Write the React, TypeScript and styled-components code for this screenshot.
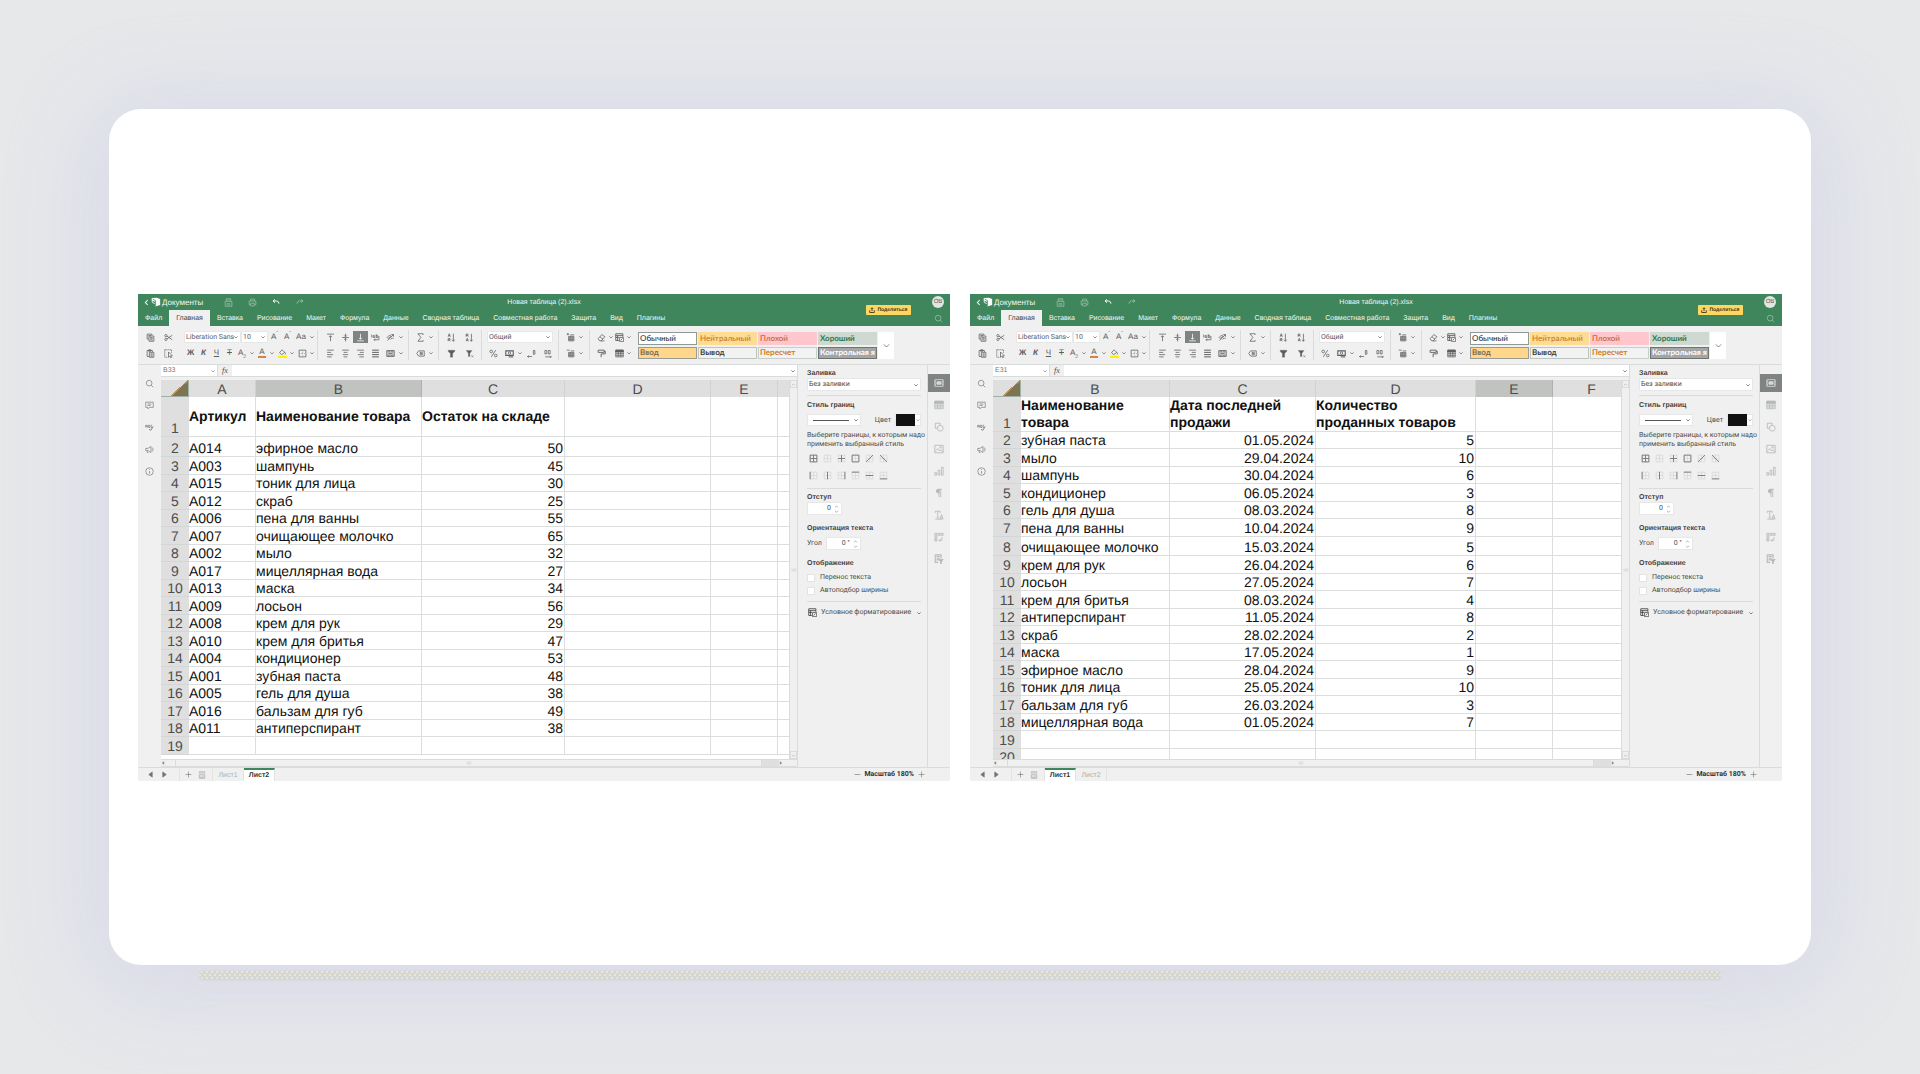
import React, { useId } from "react";
import styled, { createGlobalStyle, css } from "styled-components";

const ui = `"Liberation Sans", Arial, sans-serif`;
const compact = `Roboto, "Liberation Sans", sans-serif`;
const green = "#40865c";
const panel = "#f0f0f0";
const line = "#dadcdb";
const ink = "#4a4d4b";

const GlobalStyle = createGlobalStyle`
  *, *::before, *::after { box-sizing: border-box; }
  body { margin: 0; background: #e6e8ea; font-family: ${ui}; text-rendering: geometricPrecision; }
  button, input, select { font: inherit; color: inherit; text-rendering: inherit; margin: 0; padding: 0; border: 0; border-radius: 0; background: none; outline: none; }
  h2, p { margin: 0; }
`;

/* ---------- icons ---------- */

const icons: Record<string, React.ReactNode> = {
  chevron: <path d="M3.500 5 6 7.500 8.500 5" />,
  up: <path d="M2.500 8 6 4.500 9.500 8" />,
  down: <path d="M2.500 4.500 6 8 9.500 4.500" />,
  back: <path d="M8 2 4 6l4 4" strokeWidth="1.800" />,
  save: <><path d="M1.500 4.500h9V11h-9zM3 4.500V1h6v3.500" /><path d="M4.500 2.700h3M3.500 7.500h5M3.500 9.200h5" /></>,
  print: <><path d="M3.500 4V1.500h5V4M3.500 9H1.500V4h9v5h-2" /><path d="M3.500 7h5v3.500h-5z" /></>,
  undo: <path d="M4.500 2 1.500 4.500l3 2.500M1.500 4.500h5.500q3 0 3.500 4" strokeWidth="1.500" />,
  redo: <path d="M7.500 2l3 2.500-3 2.500M10.500 4.500H5q-3 0-3.500 4" strokeWidth="1.300" />,
  search: <><circle cx="5.500" cy="5.500" r="3.800" /><path d="M8.300 8.300 11 11" /></>,
  copy: <><path d="M8 3V1.500H1.500V8H4" /><path d="M4 4h6.500v7H4zM5.500 6H9M5.500 7.700H9M5.500 9.300H9M3 3.500h4" /></>,
  paste: <><path d="M4 10H1.500V2h7v2M3.500 1h3v2h-3z" /><path d="M4.500 4.500h6v6.500h-6zM6 6.500h3M6 8h3M6 9.500h3" /></>,
  cut: <><circle cx="2.500" cy="3.500" r="1.500" /><circle cx="2.500" cy="8.500" r="1.500" /><path d="M4 4.200 11 9M4 7.800 11 3" /></>,
  pick: <><path d="M1 1h9v4M1 1v10h4" strokeDasharray="1.500 .8" /><path d="M6 4v7l1.700-1.600L9 11.800l1-.5-1.100-2.300H11z" fill="#fff" /></>,
  alignTop: <path d="M1.500 1.500h9M6 11V4M4 5.500 6 3.500l2 2" />,
  alignMid: <path d="M1.500 6h9M6 .8v4M6 7.200v4M4.200 3.200 6 5l1.800-1.800M4.200 8.800 6 7l1.800 1.800" />,
  alignBottom: <path d="M1.500 10.500h9M6 1v7M4 6.500l2 2 2-2" />,
  wrap: <><path d="M1 2v4M3 3.500h2v2.500H3zM7 1.500v4.500M7 3.500h2V6H7" /><path d="M10.500 4v5H4M5.500 7.500 4 9l1.500 1.500" /></>,
  orient: <><path d="M2 10 10 2M7 2h3v3" /><path d="M1.500 6 5 2.500 6.500 4 3 7.500zM6 8.500l2.500-2 1.500 1.500" /></>,
  left: <path d="M1.500 1.500h9M1.500 4.500h5.500M1.500 7.500h8M1.500 10.500h6" />,
  center: <path d="M1.500 1.500h9M3.500 4.500h5M2.500 7.500h7M3.500 10.500h5" />,
  right: <path d="M1.500 1.500h9M5 4.500h5.500M2.500 7.500h8M4.500 10.500h6" />,
  justify: <path d="M1.500 1.500h9M1.500 4.500h9M1.500 7.500h9M1.500 10.500h9" strokeWidth="1.300" />,
  merge: <path d="M1 2h10v8H1zM4 2v2M8 2v2M4 8v2M8 8v2M1 4h10M1 8h10M3 6h6" />,
  sum: <path d="M9.500 2.500V1h-7L6.500 6l-4 5h7V9.500" />,
  named: <path d="M1 6 3.500 2.500H11v7H3.500zM5 4.500h4M5 6h4M5 7.500h4" />,
  sortAz: <><path d="M1.500 5 3 1l1.500 4M2 3.700h2M1.500 11V7.500h2.500V9.200H1.500M4.500 11 3 9.200" /><path d="M8.500 1v10M6.800 9l1.700 2 1.700-2" /></>,
  sortZa: <><path d="M1.500 11 3 7l1.500 4M2 9.700h2M1.500 5V1.500h2.500V3.200H1.500M4.500 5 3 3.200" /><path d="M8.500 1v10M6.800 9l1.700 2 1.700-2" /></>,
  filter: <path d="M1.500 1.500h9v1.500L7.500 6v5h-3V6l-3-3z" fill="currentColor" strokeWidth=".3" />,
  unfilter: <><path d="M1.500 2h8L6.500 5.500V10h-2V5.500z" fill="currentColor" strokeWidth=".3" /><path d="M8.500 8.500 11 11M11 8.500 8.500 11" strokeWidth=".7" /></>,
  percent: <><circle cx="3" cy="3.300" r="1.800" /><circle cx="9" cy="8.700" r="1.800" /><path d="M9 1.500 3 10.500" /></>,
  money: <><path d="M1 2.500h10v6H1z" strokeWidth="1.400" /><circle cx="6" cy="5.500" r="1.600" /><path d="M5 10.500h6" strokeWidth="1.400" /></>,
  decLess: <><path d="M.8 10h6M2.300 8.500.8 10l1.500 1.500" /><path d="M8.500 2h2v5h-2z" /></>,
  decMore: <><path d="M3 10.500h8M9.500 9 11 10.500 9.500 12" /><path d="M2.500 2h2.500v4.500H2.500zM7 2h2.500v4.500H7z" /></>,
  cellAdd: <><path d="M1 1.500h3M2.500 0v3M5.500 2.500H11" /><path d="M3.500 4.500h7v6h-7zM5.500 4.500v6M8 4.500v6M3.500 6.500h7M3.500 8.500h7" /></>,
  cellDel: <><path d="M1 1.500h4M6.500 2.500H11" /><path d="M3.500 4.500h7v6h-7zM5.500 4.500v6M8 4.500v6M3.500 6.500h7M3.500 8.500h7" /></>,
  eraser: <><path d="M1.500 7.500 6.500 2l4 3-5 5.500H3.500zM4 5l4 3.200" /><path d="M5 10.500h5" /></>,
  condfmt: <><path d="M1 1h9.500v4M1 1v9h4M1 3.500h9.500M1 6h4M3.500 3.500V10" strokeWidth="1.200" /><path d="M6 6h5.500v5.500H6zM7.500 10l2.500-2.800" /></>,
  painter: <path d="M1.500 1.500h8v3h-8zM9.500 3H11v3.500H5.500V11" strokeWidth="1.200" />,
  table: <><path d="M1 1.500h10v9H1zM4.300 4v6.500M7.700 4v6.500M1 6.200h10M1 8.400h10" /><path d="M1 1.500h10v2.500H1z" fill="currentColor" /></>,
  borders: <><path d="M1.500 1.500h9v9h-9z" /><path d="M6 2v8M2 6h8" strokeDasharray="1 1" strokeWidth=".6" /></>,
  fill: <><path d="M2 5 5.500 1 9 4.500 5 7.500zM9 4.500q1.800 2 .5 2.800" /><path d="M0 10.500h12" stroke="#fff200" strokeWidth="3" /></>,
  comment: <><path d="M1 1.500h10v7H6L4 10.500v-2H1z" /><path d="M3.500 4h5M3.500 6h4" /></>,
  spell: <><path d="M1 6V3h2v3M1 4.700h2M4.500 6V3h1.800v3zM9.500 3H8v3h1.500" /><path d="M5.500 8 7.500 10 11 4.500" strokeWidth="1.300" /></>,
  horn: <><path d="M1 4.500h3L8 2v8L4 7.500H1zM3 7.500V10h1.500" /><path d="M10 3.500q1.500 2.500 0 5" /></>,
  info: <><circle cx="6" cy="6" r="5" /><path d="M6 5.300v3.500M6 3v1" /></>,
  cellSet: <><path d="M1 2h10v8H1z" /><path d="M3.500 4.500h5v3h-5z" fill="currentColor" /><path d="M1 4h1.500M1 6h1.500M1 8h1.500M9.500 4H11M9.500 6H11M9.500 8H11" /></>,
  shape: <><path d="M4 7.500H1.500v-6h6V4" /><circle cx="7.500" cy="7.500" r="3.500" /></>,
  image: <><path d="M1 1.500h10v9H1zM1.500 9l3-3.500L7 8.500l1.500-1.500L11 9.500" /><circle cx="8" cy="4" r="1" /></>,
  chart: <path d="M1 8h2v3H1zM5 5h2v6H5zM9 1.500h2V11H9z" />,
  para: <><path d="M6 1.500H5a2.200 2.200 0 0 0 0 4.400h1z" fill="currentColor" /><path d="M9.500 1.500H5.500M6 1.500V11M8 1.500V11" /></>,
  textArt: <><path d="M1.500 3.500v-2h6v2M4.500 1.500V9M3 9.500h3" /><path d="M7 11 9 5.500l2 5.500M7.500 9.500h3M1.500 11h9" /></>,
  pivot: <><path d="M1 1.500h2.500V4H1zM4.800 1.500h2.500V4H4.800zM8.500 1.500H11V4H8.500zM1 5.500h2.500V8H1zM1 9h2.500v2H1z" /><path d="M9.500 6v4H6M7.500 8.500 6 10l1.500 1.500" /></>,
  slicer: <><path d="M1.500 1h7v4M1.500 1v9H5M3 3h4M3 5h4M3 7h2.500" strokeWidth="1.300" /><path d="M5.500 6.500H11L9 9v2.500H7.800V9z" fill="currentColor" /></>,
  minus: <path d="M1 6h10" />,
  plus: <path d="M1 6h10M6 1v10" />,
  prev: <path d="M9 1.500v9L3 6z" fill="currentColor" />,
  next: <path d="M3 1.500v9L9 6z" fill="currentColor" />,
  list: <path d="M2 1h8v2H2zM2 5h8M2 7.500h8M2 10h8M2 5v6h8V5" />,
  grip: <path d="M2 3v6M4.500 3v6M7 3v6M9.500 3v6" />,
  share: <><path d="M1.500 6.500V11h9V6.500" strokeWidth="1.800" /><path d="M6 8V2M3.500 4 6 1.500 8.500 4" strokeWidth="1.800" /></>,
};

const Svg = styled.svg<{ $size: number }>`
  display: block;
  flex: none;
  width: ${(p) => p.$size}px;
  height: ${(p) => p.$size}px;
  fill: none;
  stroke: currentColor;
  stroke-width: 1;
  pointer-events: none;
`;

const Icon = ({ name, size = 9 }: { name: string; size?: number }) => (
  <Svg viewBox="0 0 12 12" $size={size} aria-hidden="true">{icons[name]}</Svg>
);

/* ---------- page ---------- */

const Page = styled.main`
  min-height: 100vh;
  display: flex;
  flex-direction: column;
  padding: 109px 109px 93px;
`;

const Card = styled.section`
  flex: 1;
  display: flex;
  align-items: center;
  gap: 20px;
  padding: 34px 29px 33px;
  border-radius: 32px;
  background: #fff;
  box-shadow: 0 10px 90px 16px rgba(208, 206, 232, 0.62);
`;

const Underline = styled.div`
  height: 9px;
  margin: 6px 90px 1px;
  border-radius: 5px;
  background:
    radial-gradient(circle at 1px 1px, rgba(245, 234, 208, 0.8) 0 1px, transparent 1px) 0 3px / 5px 6px,
    radial-gradient(circle at 3px 1px, rgba(245, 234, 208, 0.8) 0 1px, transparent 1px) 0 6px / 5px 6px,
    #d2d8d5;
  box-shadow: 0 0 3px #d2d8d5;
`;

/* ---------- editor frame ---------- */

const Editor = styled.article`
  flex: 1;
  min-width: 0;
  overflow: hidden;
  background: ${panel};
  color: ${ink};
  font-size: 7px;
  line-height: 9px;
`;

const Header = styled.header`
  display: grid;
  grid-template-columns: 1fr auto 1fr;
  grid-template-rows: 16px 16px;
  background: ${green};
  color: #f2f7f4;
`;

const Brand = styled.div`
  display: flex;
  align-items: center;
  padding-left: 5px;
`;

const BrandLink = styled.a`
  display: flex;
  align-items: center;
  gap: 1px;
  width: 73px;
  color: inherit;
  font-size: 8px;
  text-decoration: none;
`;

const HeaderTool = styled.button<{ $dim?: boolean }>`
  display: grid;
  place-items: center;
  width: 24px;
  height: 14px;
  opacity: ${(p) => (p.$dim ? 0.5 : 1)};
`;

const Title = styled.h2`
  align-self: center;
  font-size: 7px;
  font-weight: 400;
`;

const Tabs = styled.nav`
  grid-area: 2 / 1 / 3 / 4;
  display: flex;
`;

const Tab = styled.button<{ $active?: boolean }>`
  padding: 0 7px;
  white-space: nowrap;
  ${(p) => p.$active && css`background: ${panel}; color: #444;`}
`;

const Account = styled.div`
  grid-area: 1 / 3 / 3 / 4;
  justify-self: end;
  display: flex;
  align-items: center;
  gap: 15px;
`;

const Share = styled.button`
  display: flex;
  align-items: center;
  justify-content: center;
  gap: 2px;
  width: 45px;
  height: 10px;
  border-radius: 1px;
  background: #ffd75e;
  color: #3d3520;
  font-size: 5px;
  line-height: 10px;
  font-weight: 700;
`;

const AccountSide = styled.div`
  display: grid;
  justify-items: center;
  align-items: center;
  grid-template-rows: 16px 16px;
`;

const Avatar = styled.span`
  width: 12px;
  height: 12px;
  border-radius: 50%;
  background: #e2e6e3;
  color: #555;
  font-size: 6px;
  line-height: 12px;
  text-align: center;
`;

/* ---------- toolbar ---------- */

const Toolbar = styled.div`
  display: flex;
  align-items: center;
  height: 39px;
  border-bottom: 1px solid ${line};
  color: #5b5e5c;
`;

const Group = styled.div<{ $w: number; $pad: number; $line?: boolean }>`
  flex: none;
  display: grid;
  grid-template-rows: 16px 16px;
  align-content: center;
  width: ${(p) => p.$w}px;
  height: 30px;
  padding-left: ${(p) => p.$pad}px;
  border-right: ${(p) => (p.$line ? `1px solid ${line}` : "0")};
`;

const Row = styled.div`
  display: flex;
  align-items: center;
`;

const ToolButton = styled.button<{ $w: number; $on?: boolean }>`
  flex: none;
  display: flex;
  align-items: center;
  width: ${(p) => p.$w}px;
  height: 12px;
  ${(p) => p.$on && css`background: #7f8381; color: #fff;`}
`;

const Face = styled.span<{ $w: number }>`
  flex: none;
  display: grid;
  place-items: center;
  width: ${(p) => p.$w}px;
`;

const Glyph = styled.span<{ $bold?: boolean; $italic?: boolean; $line?: string; $bar?: string }>`
  font-size: 8px;
  line-height: 8px;
  font-weight: ${(p) => (p.$bold ? 700 : 400)};
  font-style: ${(p) => (p.$italic ? "italic" : "normal")};
  text-decoration: ${(p) => p.$line ?? "none"};
  border-bottom: ${(p) => (p.$bar ? `2px solid ${p.$bar}` : "0")};
  padding: ${(p) => (p.$bar ? "0 1px" : "0")};
  sub, sup { font-size: 5px; line-height: 0; }
`;

type ToolProps = { icon?: string; w: number; drop?: number; on?: boolean; label: string; children?: React.ReactNode };

const Tool = ({ icon, w, drop = 0, on, label, children }: ToolProps) => (
  <ToolButton type="button" $w={w + drop} $on={on} aria-label={label}>
    <Face $w={w}>{icon ? <Icon name={icon} /> : children}</Face>
    {drop > 0 && <Face $w={drop}><Icon name="chevron" size={8} /></Face>}
  </ToolButton>
);

const Pick = styled.span<{ $w?: number; $h: number }>`
  flex: none;
  display: grid;
  grid-template-columns: 1fr 8px;
  align-items: center;
  width: ${(p) => (p.$w ? `${p.$w}px` : "100%")};
  height: ${(p) => p.$h}px;
  border: 1px solid #e6e7e6;
  border-radius: 1px;
  background: #fff;
  font-family: ${compact};

  select {
    grid-area: 1 / 1 / 2 / 3;
    appearance: none;
    width: 100%;
    height: 100%;
    padding-left: 1px;
  }
  svg { grid-area: 1 / 2 / 2 / 3; }
`;

const Dropdown = ({ label, value, w, h = 12 }: { label: string; value: string; w?: number; h?: number }) => (
  <Pick $w={w} $h={h}>
    <select aria-label={label} defaultValue={value}><option>{value}</option></select>
    <Icon name="chevron" size={8} />
  </Pick>
);

const Gallery = styled.div`
  display: grid;
  grid-template-columns: repeat(4, 59px) 16px;
  grid-template-rows: 13px 12px;
  gap: 2px 1px;
  margin-left: 1px;
`;

const StyleCell = styled.button<{ $bg: string; $fg: string; $edge?: string; $bold?: boolean }>`
  padding-left: 1px;
  border: 1px solid ${(p) => p.$edge ?? p.$bg};
  background: ${(p) => p.$bg};
  color: ${(p) => p.$fg};
  font-family: Lato, "Noto Sans", sans-serif;
  font-size: 8px;
  font-weight: ${(p) => (p.$bold ? 700 : 500)};
  line-height: 9px;
  text-align: left;
  white-space: nowrap;
`;

const GalleryMore = styled.button`
  grid-area: 1 / 5 / 3 / 6;
  display: grid;
  place-items: center;
  background: #fff;
`;

/* ---------- body ---------- */

const Body = styled.div`
  display: grid;
  grid-template-columns: 23px minmax(0, 1fr) 129px 23px;
`;

const Rail = styled.nav<{ $edge?: boolean }>`
  display: flex;
  flex-direction: column;
  padding-top: 7px;
  color: ${(p) => (p.$edge ? "#b3bab6" : "#7d8380")};
  border-left: ${(p) => (p.$edge ? `1px solid ${line}` : "0")};
`;

const RailButton = styled.button<{ $on?: boolean }>`
  display: grid;
  place-items: center;
  height: 18px;
  margin: 2px 0;
  ${(p) => p.$on && css`background: #7f8381; color: #d9dcda;`}
`;

const Work = styled.div`
  display: flex;
  flex-direction: column;
  border-right: 1px solid ${line};
`;

const FormulaBar = styled.div`
  display: flex;
  height: 12px;
  margin-bottom: 3px;
  border-bottom: 1px solid ${line};
  background: #fff;
`;

const NameBox = styled.label`
  display: flex;
  align-items: center;
  width: 57px;
  border-right: 1px solid ${line};
  color: #777;
  input { width: 48px; padding-left: 2px; }
`;

const Fx = styled.button`
  width: 14px;
  background: ${panel};
  font-family: "Liberation Serif", serif;
  font-size: 8px;
  font-style: italic;
`;

const FormulaInput = styled.label`
  flex: 1;
  display: flex;
  align-items: center;
  input { flex: 1; min-width: 0; }
`;

const SheetArea = styled.div`
  display: grid;
  grid-template-columns: minmax(0, 1fr) 8px;
`;

const Viewport = styled.div`
  height: 379px;
  overflow: hidden;
  background: #fff;
`;

const VScroll = styled.div`
  display: flex;
  flex-direction: column;
  align-items: center;
  justify-content: space-between;
  border-left: 1px solid ${line};
  color: #8b908d;
  button { display: grid; place-items: center; width: 7px; height: 8px; border: 1px solid ${line}; }
  > svg { color: #c4c8c6; }
`;

const HScroll = styled.div`
  display: grid;
  grid-template-columns: 14px minmax(0, 1fr) 17px 18px;
  align-items: center;
  height: 8px;
  border: 1px solid ${line};
  border-width: 1px 0;
  color: #8b908d;
  button { height: 6px; }
`;

const Thumb = styled.div`
  display: grid;
  place-items: center;
  height: 6px;
  border: 1px solid ${line};
  border-width: 0 1px;
  color: #c4c8c6;
`;

const Trough = styled.div`
  height: 6px;
  background: #dedfde;
`;

const Sheet = styled.table`
  width: 100px;
  min-width: 100%;
  table-layout: fixed;
  border-collapse: separate;
  border-spacing: 0;
  color: #111;
  font-size: 14px;
  line-height: 16px;

  th, td { padding: 0; white-space: nowrap; }
  tbody tr { height: 17px; }
  tbody tr:nth-child(odd) { height: 18px; }
`;

const ColHead = styled.th<{ $on?: boolean }>`
  height: 17px;
  border-right: 1px solid ${(p) => (p.$on ? "#aeb2af" : "#d0d2d1")};
  background: ${(p) => (p.$on ? "#c0c3c0" : "#dfdfdf")};
  color: #4c4c4c;
  font-weight: 400;
`;

const Corner = styled.th`
  height: 17px;
  background: linear-gradient(137deg, #dfdfdf 0 60%, #c98a4c 60% 64%, #7d7550 64%);
  border-right: 1px solid #9fb0a6;
  border-bottom: 1px solid #9fb0a6;
`;

const RowHead = styled.th`
  background: #dfdfdf;
  color: #4c4c4c;
  font-weight: 400;
  vertical-align: bottom;
  border-bottom: 1px solid #d4d6d5;
`;

const Cell = styled.td<{ $num?: boolean; $head?: boolean; $mid?: boolean }>`
  && {
    padding: 0 1px 0 0;
    white-space: ${(p) => (p.$head ? "pre-line" : "nowrap")};
  }
  border-right: 1px solid #dcdedd;
  border-bottom: 1px solid #dcdedd;
  text-align: ${(p) => (p.$num ? "right" : "left")};
  font-weight: ${(p) => (p.$head ? 700 : 400)};
  line-height: ${(p) => (p.$head ? 17 : 16)}px;
  vertical-align: ${(p) => (p.$mid ? "middle" : "bottom")};
`;

/* ---------- right panel ---------- */

const Side = styled.aside`
  display: flex;
  flex-direction: column;
  padding: 4px 6px 0 9px;
  font-family: ${compact};
  white-space: nowrap;
`;

const Heading = styled.h2`
  font-family: ${ui};
  font-size: 7px;
  line-height: 9px;
  font-weight: 700;
  color: #444;
`;

const Rule = styled.hr`
  width: 100%;
  height: 1px;
  margin: 4px 0;
  border: 0;
  background: ${line};
`;

const Line = styled.div<{ $top?: number; $gap?: number }>`
  display: flex;
  align-items: center;
  gap: ${(p) => p.$gap ?? 4}px;
  margin-top: ${(p) => p.$top ?? 0}px;
`;

const StrokeButton = styled.button`
  display: flex;
  align-items: center;
  justify-content: space-between;
  width: 54px;
  height: 12px;
  margin-right: auto;
  padding-left: 5px;
  border: 1px solid #e6e7e6;
  background: #fff;
  &::before { content: ""; width: 36px; border-top: 1px solid #555; }
`;

const ColorButton = styled.button`
  display: flex;
  align-items: center;
  width: 26px;
  height: 12px;
  border: 1px solid #e6e7e6;
  background: #fff;
  &::before { content: ""; width: 19px; height: 12px; flex: none; background: #111; }
`;

const BorderGrid = styled.div`
  display: grid;
  grid-template-columns: repeat(6, 14px);
  grid-auto-rows: 17px;
  margin: 1px 0 0 -1px;
  button { display: grid; place-items: center; }
`;

const Spin = styled.span`
  display: flex;
  align-items: center;
  width: 35px;
  height: 13px;
  border: 1px solid #e6e7e6;
  background: #fff;
  input { width: 24px; padding-right: 1px; text-align: right; }
`;

const SpinArrows = styled.span`
  display: grid;
  justify-items: center;
  width: 9px;
`;

const Check = styled.label`
  display: flex;
  align-items: center;
  gap: 5px;
  height: 13px;
  input { appearance: none; width: 8px; height: 8px; border: 1px solid #e2e4e3; background: #fff; }
`;

const CondButton = styled.button`
  display: flex;
  align-items: center;
  gap: 4px;
  height: 13px;
  padding-left: 1px;
`;

/* ---------- footer ---------- */

const Footer = styled.footer`
  display: flex;
  align-items: stretch;
  height: 14px;
  padding: 0 25px 0 5px;
  border-top: 1px solid ${line};
`;

const FootButton = styled.button<{ $w: number; $pale?: boolean }>`
  display: grid;
  place-items: center;
  width: ${(p) => p.$w}px;
  color: ${(p) => (p.$pale ? "#a9adab" : "#6d716f")};
`;

const FootSpacer = styled.div<{ $w: number }>`
  width: ${(p) => p.$w}px;
  border-right: 1px solid #e2e4e3;
`;

const SheetTab = styled.button<{ $on: boolean }>`
  width: 31px;
  border-top: 2px solid ${(p) => (p.$on ? green : "transparent")};
  border-right: 1px solid #e2e4e3;
  background: ${(p) => (p.$on ? "#fff" : "transparent")};
  color: ${(p) => (p.$on ? "#333" : "#aaafac")};
  font-weight: ${(p) => (p.$on ? 700 : 400)};
`;

const ZoomBox = styled.div`
  display: flex;
  align-items: center;
  gap: 3px;
  margin-left: auto;
  color: #333;
  font-family: ${compact};
  font-weight: 700;
`;

/* ---------- border presets ---------- */

const presets: [string, string][] = [
  ["Все границы", "M1.500 1.500h9v9h-9zM6 1.500v9M1.500 6h9"],
  ["Без границ", ""],
  ["Внутренние", "M6 1.500v9M1.500 6h9"],
  ["Внешние", "M1.500 1.500h9v9h-9z"],
  ["Диагональ вверх", "M1.500 10.500l9-9"],
  ["Диагональ вниз", "M1.500 1.500l9 9"],
  ["Левая", "M1.500 1v10"],
  ["Вертикальная", "M6 1v10"],
  ["Правая", "M10.500 1v10"],
  ["Верхняя", "M1 1.500h10"],
  ["Горизонтальная", "M1 6h10"],
  ["Нижняя", "M1 10.500h10"],
];

const BorderIcon = ({ d }: { d: string }) => (
  <Svg viewBox="0 0 12 12" $size={9} aria-hidden="true">
    <path d="M1.500 1.500h9v9h-9zM6 1.500v9M1.500 6h9" stroke="#d4d8d6" />
    <path d={d} stroke="#727674" strokeWidth="1.200" />
  </Svg>
);

/* ---------- data ---------- */

type Column = { name: string; w: number; num?: boolean };
type SheetData = {
  cell: string;
  active: number;
  selected: string;
  columns: Column[];
  heights: Record<number, number>;
  middleHead?: boolean;
  rows: string[][];
};

const stock: SheetData = {
  cell: "B33",
  active: 1,
  selected: "B",
  columns: [{ name: "A", w: 67 }, { name: "B", w: 166 }, { name: "C", w: 143, num: true }, { name: "D", w: 146 }, { name: "E", w: 67 }, { name: "", w: 80 }],
  heights: { 1: 40, 2: 20 },
  middleHead: true,
  rows: [
    ["Артикул", "Наименование товара", "Остаток на складе"],
    ["A014", "эфирное масло", "50"],
    ["A003", "шампунь", "45"],
    ["A015", "тоник для лица", "30"],
    ["A012", "скраб", "25"],
    ["A006", "пена для ванны", "55"],
    ["A007", "очищающее молочко", "65"],
    ["A002", "мыло", "32"],
    ["A017", "мицеллярная вода", "27"],
    ["A013", "маска", "34"],
    ["A009", "лосьон", "56"],
    ["A008", "крем для рук", "29"],
    ["A010", "крем для бритья", "47"],
    ["A004", "кондиционер", "53"],
    ["A001", "зубная паста", "48"],
    ["A005", "гель для душа", "38"],
    ["A016", "бальзам для губ", "49"],
    ["A011", "антиперспирант", "38"],
    [],
  ],
};

const sales: SheetData = {
  cell: "E31",
  active: 0,
  selected: "E",
  columns: [{ name: "B", w: 149 }, { name: "C", w: 146, num: true }, { name: "D", w: 160, num: true }, { name: "E", w: 77 }, { name: "F", w: 78 }],
  heights: { 1: 35, 8: 19 },
  rows: [
    ["Наименование\nтовара", "Дата последней\nпродажи", "Количество\nпроданных товаров"],
    ["зубная паста", "01.05.2024", "5"],
    ["мыло", "29.04.2024", "10"],
    ["шампунь", "30.04.2024", "6"],
    ["кондиционер", "06.05.2024", "3"],
    ["гель для душа", "08.03.2024", "8"],
    ["пена для ванны", "10.04.2024", "9"],
    ["очищающее молочко", "15.03.2024", "5"],
    ["крем для рук", "26.04.2024", "6"],
    ["лосьон", "27.05.2024", "7"],
    ["крем для бритья", "08.03.2024", "4"],
    ["антиперспирант", "11.05.2024", "8"],
    ["скраб", "28.02.2024", "2"],
    ["маска", "17.05.2024", "1"],
    ["эфирное масло", "28.04.2024", "9"],
    ["тоник для лица", "25.05.2024", "10"],
    ["бальзам для губ", "26.03.2024", "3"],
    ["мицеллярная вода", "01.05.2024", "7"],
    [],
    [],
  ],
};

const tabs = ["Файл", "Главная", "Вставка", "Рисование", "Макет", "Формула", "Данные", "Сводная таблица", "Совместная работа", "Защита", "Вид", "Плагины"];

/* ---------- parts ---------- */

const TopBar = () => (
  <Header>
    <Brand>
      <BrandLink href="#documents">
        <Icon name="back" size={7} />
        <Svg viewBox="0 0 12 12" $size={10} aria-hidden="true">
          <path d="M1 1.200 7 .8 11 2.500V9.500L5 11.500V6L1 4z" fill="#fff" stroke="none" />
          <path d="M1.500 1.500v5l3 1.500" stroke="#fff" />
          <path d="M2 2.600 5.500 4.300V11" stroke={green} strokeWidth=".9" />
        </Svg>
        Документы
      </BrandLink>
      <HeaderTool type="button" $dim aria-label="Сохранить"><Icon name="save" /></HeaderTool>
      <HeaderTool type="button" $dim aria-label="Печать"><Icon name="print" /></HeaderTool>
      <HeaderTool type="button" aria-label="Отменить"><Icon name="undo" size={8} /></HeaderTool>
      <HeaderTool type="button" $dim aria-label="Повторить"><Icon name="redo" size={8} /></HeaderTool>
    </Brand>
    <Title>Новая таблица (2).xlsx</Title>
    <Tabs>
      {tabs.map((t) => <Tab key={t} type="button" $active={t === "Главная"}>{t}</Tab>)}
    </Tabs>
    <Account>
      <Share type="button"><Icon name="share" size={6} />Поделиться</Share>
      <AccountSide>
        <Avatar>ОВ</Avatar>
        <HeaderTool type="button" $dim aria-label="Поиск"><Icon name="search" /></HeaderTool>
      </AccountSide>
    </Account>
  </Header>
);

const Ribbon = () => (
  <Toolbar>
    <Group $w={46} $pad={3}>
      <Row><Tool icon="copy" w={18} label="Копировать" /><Tool icon="cut" w={18} label="Вырезать" /></Row>
      <Row><Tool icon="paste" w={18} label="Вставить" /><Tool icon="pick" w={18} label="Выделить" /></Row>
    </Group>
    <Group $w={134} $pad={0} $line>
      <Row>
        <Dropdown label="Шрифт" value="Liberation Sans" w={57} />
        <Dropdown label="Размер шрифта" value="10" w={27} />
        <Tool w={13} label="Увеличить шрифт"><Glyph>A<sup>ˆ</sup></Glyph></Tool>
        <Tool w={13} label="Уменьшить шрифт"><Glyph>A<sup>ˇ</sup></Glyph></Tool>
        <Tool w={14} drop={8} label="Регистр"><Glyph>Aa</Glyph></Tool>
      </Row>
      <Row>
        <Tool w={13} label="Полужирный"><Glyph $bold>Ж</Glyph></Tool>
        <Tool w={13} label="Курсив"><Glyph $bold $italic>К</Glyph></Tool>
        <Tool w={13} label="Подчёркнутый"><Glyph $line="underline">Ч</Glyph></Tool>
        <Tool w={13} label="Зачёркнутый"><Glyph $line="line-through">Т</Glyph></Tool>
        <Tool w={12} drop={8} label="Индекс"><Glyph>A<sub>2</sub></Glyph></Tool>
        <Tool w={12} drop={8} label="Цвет шрифта"><Glyph $bar="#cf8642">A</Glyph></Tool>
        <Tool w={12} drop={8} icon="fill" label="Цвет заливки" />
        <Tool w={12} drop={8} icon="borders" label="Границы" />
      </Row>
    </Group>
    <Group $w={91} $pad={5} $line>
      <Row>
        <Tool icon="alignTop" w={15} label="По верхнему краю" />
        <Tool icon="alignMid" w={15} label="По середине" />
        <Tool icon="alignBottom" w={15} on label="По нижнему краю" />
        <Tool icon="wrap" w={15} label="Перенос текста" />
        <Tool icon="orient" w={14} drop={8} label="Ориентация" />
      </Row>
      <Row>
        <Tool icon="left" w={15} label="По левому краю" />
        <Tool icon="center" w={15} label="По центру" />
        <Tool icon="right" w={15} label="По правому краю" />
        <Tool icon="justify" w={15} label="По ширине" />
        <Tool icon="merge" w={14} drop={8} label="Объединить" />
      </Row>
    </Group>
    <Group $w={30} $pad={4} $line>
      <Row><Tool icon="sum" w={14} drop={8} label="Сумма" /></Row>
      <Row><Tool icon="named" w={14} drop={8} label="Именованные диапазоны" /></Row>
    </Group>
    <Group $w={43} $pad={3} $line>
      <Row><Tool icon="sortAz" w={18} label="По возрастанию" /><Tool icon="sortZa" w={18} label="По убыванию" /></Row>
      <Row><Tool icon="filter" w={18} label="Фильтр" /><Tool icon="unfilter" w={18} label="Очистить фильтр" /></Row>
    </Group>
    <Group $w={77} $pad={2} $line>
      <Row><Face $w={3} /><Dropdown label="Числовой формат" value="Общий" w={66} /></Row>
      <Row>
        <Tool icon="percent" w={18} label="Процент" />
        <Tool icon="money" w={14} drop={8} label="Валюта" />
        <Tool icon="decLess" w={14} label="Меньше знаков" />
        <Tool icon="decMore" w={18} label="Больше знаков" />
      </Row>
    </Group>
    <Group $w={31} $pad={4} $line>
      <Row><Tool icon="cellAdd" w={14} drop={8} label="Вставить ячейки" /></Row>
      <Row><Tool icon="cellDel" w={14} drop={8} label="Удалить ячейки" /></Row>
    </Group>
    <Group $w={47} $pad={5}>
      <Row><Tool icon="eraser" w={12} drop={6} label="Очистить" /><Tool icon="condfmt" w={12} drop={8} label="Условное форматирование" /></Row>
      <Row><Tool icon="painter" w={12} label="Формат по образцу" /><Face $w={6} /><Tool icon="table" w={12} drop={8} label="Форматировать как таблицу" /></Row>
    </Group>
    <Gallery>
      <StyleCell type="button" $bg="#fff" $fg="#333" $edge="#8f9a94">Обычный</StyleCell>
      <StyleCell type="button" $bg="#ffdc94" $fg="#c07a2c">Нейтральный</StyleCell>
      <StyleCell type="button" $bg="#ffc6cd" $fg="#c8642c">Плохой</StyleCell>
      <StyleCell type="button" $bg="#d0d8d2" $fg="#2c7a4c" $bold>Хороший</StyleCell>
      <StyleCell type="button" $bg="#ffd68c" $fg="#7d6c50" $edge="#9a9c90" $bold>Ввод</StyleCell>
      <StyleCell type="button" $bg="#f2f2f2" $fg="#3d3d3d" $edge="#bcc4c0" $bold>Вывод</StyleCell>
      <StyleCell type="button" $bg="#f2f2f2" $fg="#cf7a2a" $edge="#c8cecb" $bold>Пересчет</StyleCell>
      <StyleCell type="button" $bg="#a3a6a4" $fg="#fff" $edge="#6f7471" $bold>Контрольная я</StyleCell>
      <GalleryMore type="button" aria-label="Ещё стили"><Icon name="down" /></GalleryMore>
    </Gallery>
  </Toolbar>
);

const SheetTable = ({ data }: { data: SheetData }) => (
  <Sheet>
    <colgroup>
      <col width={28} />
      {data.columns.map((c, i) => <col key={i} width={c.w} />)}
    </colgroup>
    <thead>
      <tr>
        <Corner />
        {data.columns.map((c, i) => <ColHead key={i} $on={c.name === data.selected}>{c.name}</ColHead>)}
      </tr>
    </thead>
    <tbody>
      {data.rows.map((r, y) => (
        <tr key={y} style={data.heights[y + 1] ? { height: data.heights[y + 1] } : undefined}>
          <RowHead scope="row">{y + 1}</RowHead>
          {data.columns.map((c, x) => (
            <Cell key={x} $head={y === 0} $mid={y === 0 && data.middleHead} $num={y > 0 && c.num}>{r[x]}</Cell>
          ))}
        </tr>
      ))}
    </tbody>
  </Sheet>
);

const Spinner = ({ id, value }: { id: string; value: string }) => (
  <Spin>
    <input id={id} type="text" defaultValue={value} />
    <SpinArrows><Icon name="up" size={5} /><Icon name="down" size={5} /></SpinArrows>
  </Spin>
);

const CellSettings = () => {
  const id = useId();
  return (
    <Side>
      <Heading>Заливка</Heading>
      <Dropdown label="Заливка" value="Без заливки" h={13} />
      <Rule />
      <Line $top={1}><Heading>Стиль границ</Heading></Line>
      <Line $top={4}>
        <StrokeButton type="button" aria-label="Стиль линии"><Icon name="chevron" size={8} /></StrokeButton>
        Цвет
        <ColorButton type="button" aria-label="Цвет границ"><Icon name="chevron" size={6} /></ColorButton>
      </Line>
      <Line $top={5}><p>Выберите границы, к которым надо<br />применить выбранный стиль</p></Line>
      <BorderGrid>
        {presets.map(([label, d]) => <button key={label} type="button" aria-label={label}><BorderIcon d={d} /></button>)}
      </BorderGrid>
      <Rule />
      <Line><Heading as="label" htmlFor={`${id}-indent`}>Отступ</Heading></Line>
      <Line><Spinner id={`${id}-indent`} value="0" /></Line>
      <Line $top={9}><Heading>Ориентация текста</Heading></Line>
      <Line $top={4}><label htmlFor={`${id}-angle`}>Угол</label><Spinner id={`${id}-angle`} value="0 °" /></Line>
      <Line $top={9}><Heading>Отображение</Heading></Line>
      <Line $top={3}><Check><input type="checkbox" />Перенос текста</Check></Line>
      <Line><Check><input type="checkbox" />Автоподбор ширины</Check></Line>
      <Rule />
      <CondButton type="button"><Icon name="condfmt" />Условное форматирование<Icon name="chevron" size={8} /></CondButton>
    </Side>
  );
};

const leftRail: [string, string][] = [["search", "Поиск"], ["comment", "Комментарии"], ["spell", "Орфография"], ["horn", "Обратная связь"], ["info", "О программе"]];
const rightRail: [string, string][] = [["cellSet", "Ячейка"], ["table", "Таблица"], ["shape", "Фигура"], ["image", "Изображение"], ["chart", "Диаграмма"], ["para", "Абзац"], ["textArt", "Текст"], ["pivot", "Сводная"], ["slicer", "Срез"]];

const Spreadsheet = ({ data }: { data: SheetData }) => (
  <Editor>
    <TopBar />
    <Ribbon />
    <Body>
      <Rail>
        {leftRail.map(([icon, label]) => <RailButton key={icon} type="button" aria-label={label}><Icon name={icon} /></RailButton>)}
      </Rail>
      <Work>
        <FormulaBar>
          <NameBox><input type="text" aria-label="Имя ячейки" defaultValue={data.cell} /><Icon name="chevron" size={8} /></NameBox>
          <Fx type="button">fx</Fx>
          <FormulaInput><input type="text" aria-label="Формула" /><Icon name="chevron" size={8} /></FormulaInput>
        </FormulaBar>
        <SheetArea>
          <Viewport><SheetTable data={data} /></Viewport>
          <VScroll>
            <button type="button" aria-label="Вверх"><Icon name="up" size={5} /></button>
            <Icon name="grip" size={6} />
            <button type="button" aria-label="Вниз"><Icon name="down" size={5} /></button>
          </VScroll>
        </SheetArea>
        <HScroll>
          <button type="button" aria-label="Влево"><Icon name="prev" size={4} /></button>
          <Thumb><Icon name="grip" size={6} /></Thumb>
          <Trough />
          <button type="button" aria-label="Вправо"><Icon name="next" size={4} /></button>
        </HScroll>
      </Work>
      <CellSettings />
      <Rail $edge>
        {rightRail.map(([icon, label], i) => <RailButton key={icon} type="button" $on={i === 0} aria-label={label}><Icon name={icon} size={10} /></RailButton>)}
      </Rail>
    </Body>
    <Footer>
      <FootButton type="button" $w={14} aria-label="Предыдущий лист"><Icon name="prev" size={7} /></FootButton>
      <FootButton type="button" $w={14} aria-label="Следующий лист"><Icon name="next" size={7} /></FootButton>
      <FootSpacer $w={9} />
      <FootButton type="button" $w={16} aria-label="Добавить лист"><Icon name="plus" size={7} /></FootButton>
      <FootButton type="button" $w={11} $pale aria-label="Список листов"><Icon name="list" size={8} /></FootButton>
      <FootSpacer $w={6} />
      {["Лист1", "Лист2"].map((name, i) => <SheetTab key={name} type="button" $on={i === data.active}>{name}</SheetTab>)}
      <ZoomBox>
        <FootButton type="button" $w={8} aria-label="Уменьшить"><Icon name="minus" size={7} /></FootButton>
        Масштаб 180%
        <FootButton type="button" $w={8} aria-label="Увеличить"><Icon name="plus" size={7} /></FootButton>
      </ZoomBox>
    </Footer>
  </Editor>
);

export default function App() {
  return (
    <Page>
      <GlobalStyle />
      <Card>
        <Spreadsheet data={stock} />
        <Spreadsheet data={sales} />
      </Card>
      <Underline />
    </Page>
  );
}
